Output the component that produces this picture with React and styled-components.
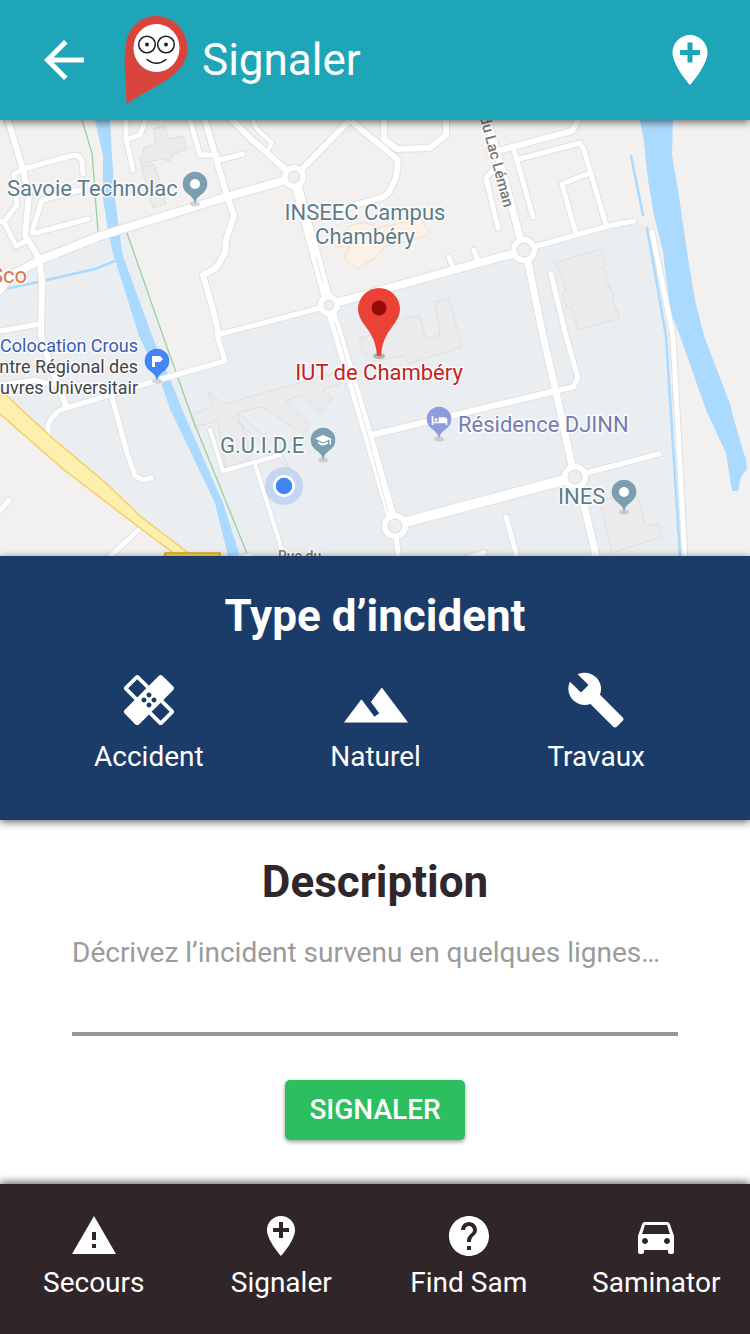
import React from "react";
import styled, { createGlobalStyle } from "styled-components";

const GlobalStyle = createGlobalStyle`
  *, *::before, *::after { box-sizing: border-box; }
  body {
    margin: 0;
    background: #ffffff;
    color: #2f272a;
    font-family: Roboto, "Liberation Sans", sans-serif;
  }
`;

const Page = styled.div`
  display: flex;
  flex-direction: column;
  min-height: 100vh;
`;

const Header = styled.header`
  position: relative;
  z-index: 1;
  display: flex;
  align-items: center;
  height: 120px;
  padding: 0 30px 0 34px;
  background: #1ea5b8;
  color: #ffffff;
  box-shadow: 0 2px 8px rgba(0, 0, 0, 0.6);
`;

const IconButton = styled.button`
  display: flex;
  padding: 0;
  border: 0;
  background: none;
  color: inherit;
  cursor: pointer;
`;

const LogoSvg = styled.svg`
  width: 64px;
  height: 90px;
  margin: 0 14px 0 30px;
`;

const Title = styled.h1`
  flex: 1;
  margin: 0;
  font-size: 44px;
  line-height: 52px;
  font-weight: 400;
`;

const IconSvg = styled.svg`
  display: block;
  width: ${(p) => p.$size}px;
  height: ${(p) => p.$size}px;
  fill: currentColor;
`;

const MapSvg = styled.svg`
  display: block;
  width: 100%;
  height: 436px;
  background: #f2f1ef;
`;

const MapLabel = styled.text`
  font-size: ${(p) => p.$size || 22}px;
  font-weight: ${(p) => p.$weight || 400};
  fill: ${(p) => p.$color || "#5f7c8a"};
  stroke: #ffffff;
  stroke-width: 3px;
  stroke-opacity: 0.8;
  stroke-linejoin: round;
  paint-order: stroke;
`;

const Incident = styled.section`
  position: relative;
  height: 264px;
  padding-top: 34px;
  background: #1b3c69;
  color: #ffffff;
  box-shadow: 0 2px 8px rgba(0, 0, 0, 0.6);
`;

const SectionTitle = styled.h2`
  margin: 0;
  font-size: 44px;
  line-height: 52px;
  font-weight: 700;
  text-align: center;
`;

const TypeList = styled.div`
  display: flex;
  justify-content: space-between;
  padding: 28px 105px 0 94px;
`;

const TypeButton = styled.button`
  display: flex;
  flex-direction: column;
  align-items: center;
  padding: 0;
  border: 0;
  background: none;
  color: inherit;
  font: 400 28px/32px Roboto, "Liberation Sans", sans-serif;
  cursor: pointer;
`;

const IconSlot = styled.span`
  display: flex;
  align-items: flex-start;
  justify-content: center;
  height: 71px;
`;

const Form = styled.form`
  flex: 1;
  display: flex;
  flex-direction: column;
  align-items: center;
  padding: 36px 72px 44px;
`;

const Label = styled.label`
  display: block;
`;

const Description = styled.textarea`
  display: block;
  width: 100%;
  height: 104px;
  margin: 24px 0 44px;
  padding: 5px 0 0;
  border: 0;
  border-bottom: 4px solid #979797;
  border-radius: 0;
  outline: 0;
  resize: none;
  overflow: hidden;
  background: transparent;
  color: #2f272a;
  font: 400 28px/32px Roboto, "Liberation Sans", sans-serif;
  &::placeholder { color: #9b9b9b; opacity: 1; }
`;

const Submit = styled.button`
  width: 180px;
  height: 60px;
  padding: 0;
  border: 0;
  border-radius: 5px;
  background: #2bbf60;
  color: #ffffff;
  font: 500 28px/32px Roboto, "Liberation Sans", sans-serif;
  box-shadow: 0 2px 4px rgba(0, 0, 0, 0.4);
  cursor: pointer;
`;

const BottomNav = styled.nav`
  display: grid;
  grid-template-columns: repeat(4, 1fr);
  height: 150px;
  padding-top: 28px;
  background: #302629;
  box-shadow: 0 -2px 8px rgba(0, 0, 0, 0.6);
`;

const NavLink = styled.a`
  display: flex;
  flex-direction: column;
  align-items: center;
  gap: 7px;
  color: #ffffff;
  font-size: 28px;
  line-height: 32px;
  text-decoration: none;
`;

const ICONS = {
  back: "M20 11H7.83l5.59-5.59L12 4l-8 8 8 8 1.41-1.41L7.83 13H20v-2z",
  addLocation:
    "M12 2C8.14 2 5 5.14 5 9c0 5.25 7 13 7 13s7-7.75 7-13c0-3.86-3.14-7-7-7zm4 8h-3v3h-2v-3H8V8h3V5h2v3h3v2z",
  healing:
    "M17.73 12.02l3.98-3.98c.39-.39.39-1.02 0-1.41l-4.34-4.34c-.39-.39-1.02-.39-1.41 0l-3.98 3.98L8 2.29C7.8 2.1 7.55 2 7.29 2c-.25 0-.51.1-.7.29L2.25 6.63c-.39.39-.39 1.02 0 1.41l3.98 3.98L2.25 16c-.39.39-.39 1.02 0 1.41l4.34 4.34c.39.39 1.02.39 1.41 0l3.98-3.98 3.98 3.98c.2.2.45.29.71.29.26 0 .51-.1.71-.29l4.34-4.34c.39-.39.39-1.02 0-1.41l-3.99-3.98zM12 9c.55 0 1 .45 1 1s-.45 1-1 1-1-.45-1-1 .45-1 1-1zm-4.71 1.96L3.66 7.34l3.63-3.63 3.62 3.62-3.62 3.63zM10 13c-.55 0-1-.45-1-1s.45-1 1-1 1 .45 1 1-.45 1-1 1zm2 2c-.55 0-1-.45-1-1s.45-1 1-1 1 .45 1 1-.45 1-1 1zm2-4c.55 0 1 .45 1 1s-.45 1-1 1-1-.45-1-1 .45-1 1-1zm2.66 9.34l-3.63-3.62 3.63-3.63 3.62 3.62-3.62 3.63z",
  terrain: "M14 6l-3.75 5 2.85 3.8-1.6 1.2C9.81 13.75 7 10 7 10l-6 8h22L14 6z",
  build:
    "M22.7 19l-9.1-9.1c.9-2.3.4-5-1.5-6.9-2-2-5-2.4-7.4-1.3L9 6 6 9 1.6 4.7C.4 7.1.9 10.1 2.9 12.1c1.9 1.9 4.6 2.4 6.9 1.5l9.1 9.1c.4.4 1 .4 1.4 0l2.3-2.3c.5-.4.5-1.1.1-1.4z",
  warning: "M1 21h22L12 2 1 21zm12-3h-2v-2h2v2zm0-4h-2v-4h2v4z",
  help: "M12 2C6.48 2 2 6.48 2 12s4.48 10 10 10 10-4.48 10-10S17.52 2 12 2zm1 17h-2v-2h2v2zm2.07-7.75l-.9.92C13.45 12.9 13 13.5 13 15h-2v-.5c0-1.1.45-2.1 1.17-2.83l1.24-1.26c.37-.36.59-.86.59-1.41 0-1.1-.9-2-2-2s-2 .9-2 2H8c0-2.21 1.79-4 4-4s4 1.79 4 4c0 .88-.36 1.68-.93 2.25z",
  car: "M18.92 6.01C18.72 5.42 18.16 5 17.5 5h-11c-.66 0-1.21.42-1.42 1.01L3 12v8c0 .55.45 1 1 1h1c.55 0 1-.45 1-1v-1h12v1c0 .55.45 1 1 1h1c.55 0 1-.45 1-1v-8l-2.08-5.99zM6.5 16c-.83 0-1.5-.67-1.5-1.5S5.67 13 6.5 13s1.5.67 1.5 1.5S7.33 16 6.5 16zm11 0c-.83 0-1.5-.67-1.5-1.5s.67-1.5 1.5-1.5 1.5.67 1.5 1.5-.67 1.5-1.5 1.5zM5 11l1.5-4.5h11L19 11H5z",
};

const Icon = ({ name, size }) => (
  <IconSvg $size={size} viewBox="0 0 24 24" aria-hidden="true">
    <path d={ICONS[name]} />
  </IconSvg>
);

const Logo = () => (
  <LogoSvg viewBox="124 15 64 90" aria-hidden="true">
    <path
      d="M126.500 104L125 72C124.300 56 125 44 128 36C132 24 143 16 156 16C174 16 187.500 31 187.500 49C187.500 63 178 72 168 79C158 86 140 95 126.500 104Z"
      fill="#d9453d"
    />
    <ellipse cx="156.500" cy="48" rx="23" ry="24" fill="#fff" />
    <g fill="none" stroke="#1d1d1d" strokeWidth="1.500">
      <circle cx="147" cy="44.500" r="8.300" />
      <circle cx="166" cy="44.500" r="8.300" />
      <path d="M147 59.500Q156.500 67 166 59.500" strokeLinecap="round" />
    </g>
    <circle cx="147" cy="44.500" r="1.900" fill="#1d1d1d" />
    <circle cx="166" cy="44.500" r="1.900" fill="#1d1d1d" />
  </LogoSvg>
);

const ROADS = [
  [6, "M8 120L23 170L29 195L25 235L39 258L42 280L41 336L52 370L66 406"],
  [5, "M24 169L70 156Q81 154 82 162L83 174M24 169L14 174L17 205L4 222L16 246L28 240M0 221L4 222"],
  [5, "M32 232L42 200L80 190M35 233L88 219"],
  [5, "M126 120L126 138L133 170M126 140L140 135L145 122M190 120L200 155L217 155M219 160L243 154"],
  [6, "M205 120L227 196L234 215L226 240L225 253L216 268L203 275L212 306L219 335"],
  [4, "M253 120L256 128L272 143L268 150"],
  [6, "M232 120L250 138L286 170M347 123L303 168"],
  [6, "M350 120L398 160L396 178L389 192Q386 197 376 199L333 212"],
  [6, "M384 120L384 139L397 149L430 148L446 135L446 120"],
  [5, "M449 257L453 268M474 250L478 261M496 167L486 178L498 228"],
  [5, "M514 150L533 217M519 159L580 143L584 150L606 225M590 173L562 184L576 234"],
  [5, "M537 246L608 226L634 221"],
  [6, "M490 153L572 131L578 120"],
  [5, "M551 274L566 336L578 378L573 387L556 391"],
  [6, "M556 391L367 436"],
  [5, "M0 331L40 324M0 385L35 380L52 385"],
  [5, "M320 308L217 335L225 361L165 378L70 407Q55 409 48 425L48 436"],
  [5, "M112 397L127 453L135 476L143 480L151 478"],
  [5, "M9 500L-3 514M144 525L108 558"],
  [4, "M210 430L223 471L280 455M255 464L285 560"],
  [5, "M506 517L518 560M484 553L460 560M220 562L250 556"],
  [5, "M652 232L673 336L685 560"],
  [7, "M520 238L505 180L487 120M528 262L543 336L556 392L572 466M580 488L597 560"],
  [5, "M586 473L659 454M396 537L399 560"],
  [8, "M0 290L12 275L40 260L100 236L226 197L286 180M339 302L500 257L514 254"],
  [10, "M406 522L564 480"],
  [10, "M297 187L329 305L365 425L392 518"],
];

const RINGS = [
  [294, 177, 9],
  [329, 305, 8],
  [524, 250, 10],
  [395, 526, 10],
  [575, 477, 10],
];

const BUILDINGS = [
  "M153 129L165 126L168 139L183 136L187 149L173 154L170 161L161 159L149 162L141 166L140 156L144 154L143 148L156 144Z",
  "M142 167L154 164L160 181L166 204L153 208L147 189Z",
  "M194 413L213 407L207 391L224 404L335 373L340 384L322 390L333 398L320 413L302 395L286 401L310 425L303 434L262 407L237 413L253 456L226 470L218 421L194 427Z",
  "M360 338L380 332L392 328L405 318L419 315L426 338L440 335L435 302L449 298L462 347L408 364L405 356L374 361L360 349Z",
  "M554 263L601 249L606 265L602 267L608 274L605 277L614 296L612 298L620 318L578 330L572 308L567 308L562 294L566 291L562 277Z",
  "M600 501L636 492L646 526L658 523L662 537L612 553Z",
];

const poiPath = (x, y) =>
  `M${x} ${y + 20}C${x - 1} ${y + 15} ${x - 3} ${y + 13} ${x - 8} ${y + 9.3}` +
  `A12.300 12.300 0 1 1 ${x + 8} ${y + 9.3}C${x + 3} ${y + 13} ${x + 1} ${y + 15} ${x} ${y + 20}Z`;

const Poi = ({ x, y, color, children }) => (
  <g>
    <ellipse cx={x} cy={y + 20} rx="5" ry="2.500" fill="#9b9b9b" opacity="0.4" />
    <path d={poiPath(x, y)} fill={color} />
    {children || <circle cx={x} cy={y} r="5" fill="#fff" />}
  </g>
);

const CityMap = () => (
  <MapSvg viewBox="0 120 750 436" preserveAspectRatio="xMidYMid slice" role="img" aria-label="Carte">
    <path
      d="M0 290L40 261L100 236L126 231L175 378L228 362L217 335L330 304L525 250L640 222L655 235L672 330L683 556L190 556L0 400Z"
      fill="#eaeef1"
    />
    <g fill="#ebebeb" stroke="#dfdfdf" strokeWidth="1">
      {BUILDINGS.map((d) => <path key={d} d={d} />)}
    </g>
    <g fill="none" stroke="#dcdcdc" strokeWidth="1">
      <path d="M232 416L290 470M238 413L276 447L290 468" />
    </g>
    <g fill="#fbf1e7" stroke="#f8dfc6" strokeWidth="1">
      <path d="M335 246L350 226Q366 219 377 228L421 219L429 232L425 236L384 247Q378 257 368 262L357 269L344 258L350 247Z" />
    </g>

    <path
      d="M95 120L110 120L112 156L115 199L120 236L122 253L152 336L170 379L182 409L223 503L240 556L228 556L215 503L170 409L160 379L139 336L113 253L109 236L103 199L103 156Z"
      fill="#aadaff"
    />
    <path
      d="M640 120L644 142L648 180L654 215L663 252L670 310L680 336L706 410L726 453L732 491L738 491L741 477L747 469L746 460L734 420L730 404L704 336L695 300L687 252L679 196L672 155L673 120Z"
      fill="#aadaff"
    />
    <g fill="none" stroke="#aadaff" strokeWidth="2.500" strokeLinecap="round">
      <path d="M5 289L38 282L95 269L115 261" />
      <path d="M631 156L643 215M647 228L666 336L680 556" />
    </g>
    <path d="M82 120L92 153L98 232M126 230L163 336L193 420L248 556" fill="none" stroke="#98d0a0" strokeWidth="1.300" />

    <g fill="none" stroke="#e0e0e0" strokeLinecap="round" strokeLinejoin="round">
      {ROADS.map(([w, d]) => <path key={d} d={d} strokeWidth={w + 2} />)}
      {RINGS.map(([x, y, r]) => <circle key={x} cx={x} cy={y} r={r} strokeWidth="8" />)}
    </g>
    <g fill="none" stroke="#ffffff" strokeLinecap="round" strokeLinejoin="round">
      {ROADS.map(([w, d]) => <path key={d} d={d} strokeWidth={w} />)}
      {RINGS.map(([x, y, r]) => <circle key={x} cx={x} cy={y} r={r} strokeWidth="6" />)}
    </g>
    <g fill="#efefee" stroke="#dcdcdc" strokeWidth="1">
      {RINGS.map(([x, y, r]) => <circle key={x} cx={x} cy={y} r={r - 3} />)}
    </g>
    <path d="M316 257L323 283M335 323L365 425L388 512" fill="none" stroke="#e3e3e3" strokeWidth="1" />

    <path
      d="M-4 386L7 396L50 436L107 484L140 516L195 558L180 558L140 528L63 469L0 414L-4 410Z"
      fill="#fdf0ae"
      stroke="#f6cd63"
      strokeWidth="1.500"
    />
    <path d="M165 553h55v5h-55z" fill="#fbd53f" stroke="#d3a521" strokeWidth="1.500" />

    <MapLabel x="7" y="196">Savoie Technolac</MapLabel>
    <MapLabel x="365" y="220" textAnchor="middle">INSEEC Campus</MapLabel>
    <MapLabel x="365" y="244" textAnchor="middle">Chambéry</MapLabel>
    <MapLabel x="27" y="283" textAnchor="end" $color="#d9774a">Sco</MapLabel>
    <MapLabel x="138" y="352" textAnchor="end" $size={18} $color="#3b5cab">Colocation Crous</MapLabel>
    <MapLabel x="138" y="373" textAnchor="end" $size={18} $color="#444444">ntre Régional des</MapLabel>
    <MapLabel x="138" y="394" textAnchor="end" $size={18} $color="#444444">uvres Universitair</MapLabel>
    <MapLabel x="379" y="380" textAnchor="middle" $color="#c5221f">IUT de Chambéry</MapLabel>
    <MapLabel x="458" y="432" $color="#757db0">Résidence DJINN</MapLabel>
    <MapLabel x="220" y="453">G.U.I.D.E</MapLabel>
    <MapLabel x="558" y="504">INES</MapLabel>
    <MapLabel $size={15} $weight={500} $color="#777777" textAnchor="end" transform="translate(504 208) rotate(75)">du Lac Léman</MapLabel>
    <MapLabel x="278" y="561" $size={14} $weight={500} $color="#777777">Rue du</MapLabel>

    <Poi x={195} y={184} color="#7b9eb0" />
    <Poi x={624} y={492} color="#7b9eb0" />
    <Poi x={157} y={361} color="#4285f4">
      <path d="M152 367V356h8l3 3-3 3h-5v5z" fill="#fff" />
    </Poi>
    <Poi x={323} y={440} color="#7b9eb0">
      <path d="M315 438.500l8-3.500 8 3.500v6h-1.500v-5l-6.500 3zM318 441.500v2q5 4 10 0v-2l-5 2z" fill="#fff" />
    </Poi>
    <Poi x={439} y={419} color="#8f9be0">
      <path d="M432.500 416v9M433 422.500h14M446.500 425v-5q0-2-3-2h-4v4" fill="none" stroke="#fff" strokeWidth="1.600" />
      <path d="M439 418h5q2 0 2 2v2h-7z" fill="#fff" />
      <circle cx="436" cy="419.500" r="1.600" fill="#fff" />
    </Poi>

    <circle cx="284" cy="486" r="19" fill="#4285f4" opacity="0.220" />
    <circle cx="284" cy="486" r="11" fill="#fff" />
    <circle cx="284" cy="486" r="8.300" fill="#4285f4" />

    <ellipse cx="379" cy="356" rx="6" ry="3" fill="#777" opacity="0.500" />
    <path
      d="M377 356C376 339 369 331 363 323C360 318 358 314 358 309A21 21 0 0 1 400 309C400 314 398 318 395 323C389 331 382 339 381 356Z"
      fill="#ea4335"
    />
    <circle cx="379" cy="308" r="7.500" fill="#960a0a" />
  </MapSvg>
);

const TYPES = [
  { label: "Accident", icon: "healing", size: 60 },
  { label: "Naturel", icon: "terrain", size: 70 },
  { label: "Travaux", icon: "build", size: 60 },
];

const LINKS = [
  { label: "Secours", icon: "warning" },
  { label: "Signaler", icon: "addLocation" },
  { label: "Find Sam", icon: "help" },
  { label: "Saminator", icon: "car" },
];

export default function App() {
  return (
    <Page>
      <GlobalStyle />
      <Header>
        <IconButton type="button" aria-label="Retour">
          <Icon name="back" size={60} />
        </IconButton>
        <Logo />
        <Title>Signaler</Title>
        <IconButton type="button" aria-label="Ajouter un lieu">
          <Icon name="addLocation" size={60} />
        </IconButton>
      </Header>
      <CityMap />
      <Incident>
        <SectionTitle>Type d’incident</SectionTitle>
        <TypeList>
          {TYPES.map((t) => (
            <TypeButton key={t.label} type="button">
              <IconSlot>
                <Icon name={t.icon} size={t.size} />
              </IconSlot>
              {t.label}
            </TypeButton>
          ))}
        </TypeList>
      </Incident>
      <Form onSubmit={(e) => e.preventDefault()}>
        <Label htmlFor="description">
          <SectionTitle as="span">Description</SectionTitle>
        </Label>
        <Description id="description" placeholder="Décrivez l’incident survenu en quelques lignes…" />
        <Submit type="submit">SIGNALER</Submit>
      </Form>
      <BottomNav>
        {LINKS.map((l) => (
          <NavLink key={l.label} href="#">
            <Icon name={l.icon} size={48} />
            {l.label}
          </NavLink>
        ))}
      </BottomNav>
    </Page>
  );
}
